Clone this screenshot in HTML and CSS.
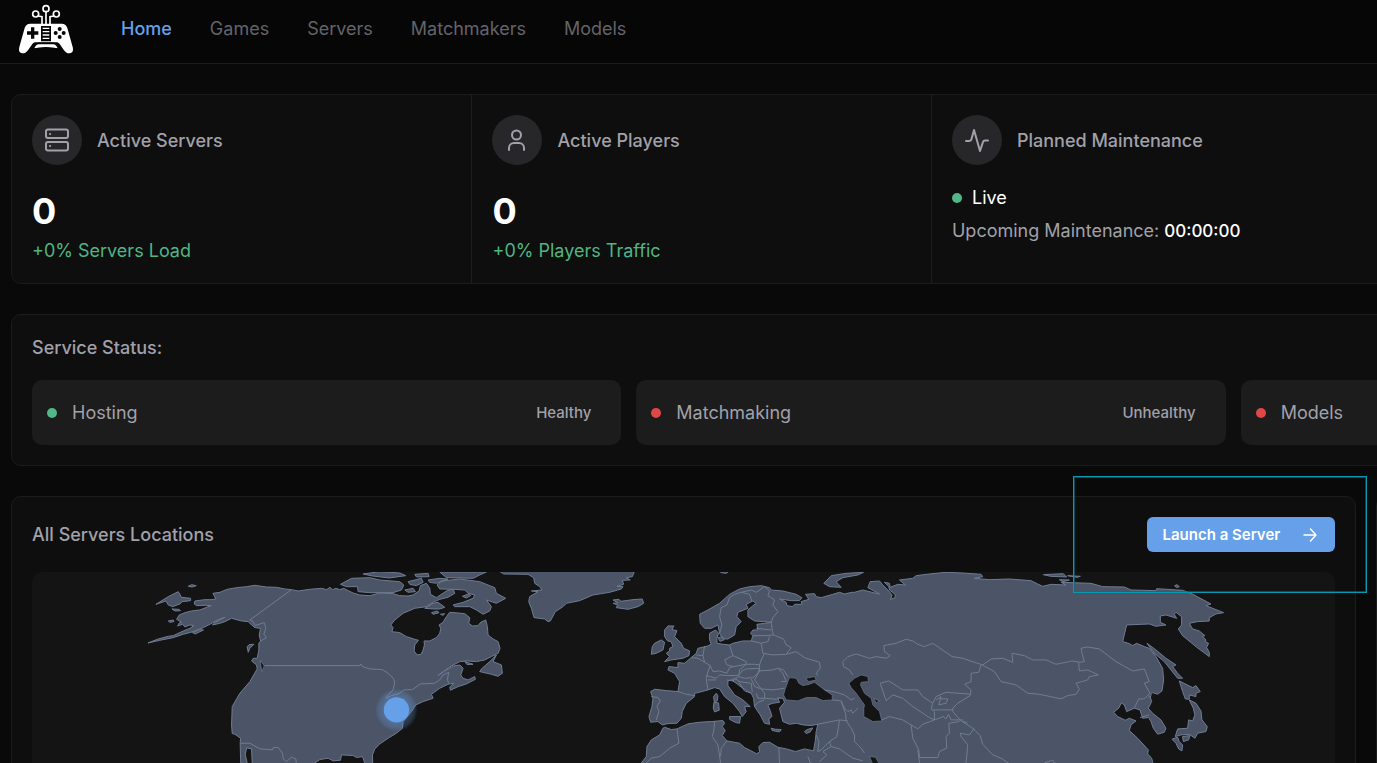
FILE: index.html
```html
<!DOCTYPE html>
<html lang="en">
<head>
<meta charset="utf-8">
<meta name="viewport" content="width=device-width, initial-scale=1">
<title>Dashboard</title>
<link rel="stylesheet" href="styles.css">
</head>
<body>
<header class="topbar">
  <a class="logo" href="#" aria-label="Dashboard">
    <svg viewBox="0 0 165 150" width="55" height="50" aria-hidden="true">
      <g fill="none" stroke="#fff" stroke-width="5">
        <circle cx="81" cy="14" r="9"/><circle cx="50" cy="30" r="9"/><circle cx="112" cy="30" r="9"/>
        <path d="M81 23v40M57 36l12 2v26M105 36l-12 2v26"/>
      </g>
      <path fill="#fff" d="M34 59h94c10 0 14 5 17 13l16 57c3 13-1 19-10 19-7 0-12-4-17-11l-12-17c-3-3-6-5-10-5H50c-4 0-7 2-10 5l-12 17c-5 7-10 11-17 11-9 0-13-6-10-19l16-57c3-8 7-13 17-13z"/>
      <path fill="#fff" stroke="#060606" stroke-width="5" d="M42 136c4-11 8-18 17-18h44c9 0 13 7 17 18-25-6-53-6-78 0z"/>
      <path fill="#060606" d="M66 66h30v46H66zM36 70h10v12h12v10H46v12H36V92H24V82h12z"/>
      <path stroke="#fff" stroke-width="4" d="M71 73h20M71 83h20M71 93h20M71 103h20"/>
      <g fill="#060606"><circle cx="122" cy="75" r="6"/><circle cx="122" cy="99" r="6"/><circle cx="110" cy="87" r="6"/><circle cx="134" cy="87" r="6"/></g>
    </svg>
  </a>
  <nav class="nav" aria-label="Main">
    <a class="nav-link active" href="#">Home</a>
    <a class="nav-link" href="#">Games</a>
    <a class="nav-link" href="#">Servers</a>
    <a class="nav-link" href="#">Matchmakers</a>
    <a class="nav-link" href="#">Models</a>
  </nav>
</header>

<main class="content">
  <section class="panel stats">
    <article class="stat">
      <div class="stat-head">
        <span class="stat-icon"><svg viewBox="0 0 24 24" aria-hidden="true"><rect x="1" y="1.500" width="22" height="8.500" rx="2"/><rect x="1" y="14" width="22" height="8.500" rx="2"/><path d="M5 6h.2M5 18h.2"/></svg></span>
        <h2 class="title">Active Servers</h2>
      </div>
      <p class="stat-value">0</p>
      <p class="stat-note">+0% Servers Load</p>
    </article>
    <article class="stat">
      <div class="stat-head">
        <span class="stat-icon"><svg viewBox="0 0 24 24" aria-hidden="true"><circle cx="11.500" cy="7" r="4.500"/><path d="M4 22v-2a5 5 0 0 1 5-5h5a5 5 0 0 1 5 5v2"/></svg></span>
        <h2 class="title">Active Players</h2>
      </div>
      <p class="stat-value">0</p>
      <p class="stat-note">+0% Players Traffic</p>
    </article>
    <article class="stat">
      <div class="stat-head">
        <span class="stat-icon"><svg viewBox="0 0 24 24" aria-hidden="true"><path d="M1 13h3q2 0 2.500-2L9 2l6 21 3-9q.5-1.500 2-1.500h3"/></svg></span>
        <h2 class="title">Planned Maintenance</h2>
      </div>
      <p class="live"><span class="dot ok"></span>Live</p>
      <p class="upcoming">Upcoming Maintenance: <time class="clock">00:00:00</time></p>
    </article>
    <article class="stat"></article>
  </section>

  <section class="panel services">
    <h2 class="title">Service Status:</h2>
    <ul class="service-list">
      <li class="service"><span class="dot ok"></span><span class="service-name">Hosting</span><span class="service-state">Healthy</span></li>
      <li class="service"><span class="dot bad"></span><span class="service-name">Matchmaking</span><span class="service-state">Unhealthy</span></li>
      <li class="service"><span class="dot bad"></span><span class="service-name">Models</span></li>
    </ul>
  </section>

  <div class="lower">
    <section class="panel locations">
      <div class="locations-head">
        <h2 class="title">All Servers Locations</h2>
        <div class="launch-wrap">
          <button class="launch" type="button">Launch a Server
            <svg viewBox="0 0 16 16" width="16" height="16" aria-hidden="true"><path d="M2 8h12M8.500 2l5.500 6-5.500 6"/></svg>
          </button>
          <span class="highlight"></span>
        </div>
      </div>
      <svg class="map" viewBox="-324 21 3912 700" role="img" aria-label="Server locations map">
        <defs>
          <radialGradient id="glow"><stop offset=".5" stop-color="#65a0e8" stop-opacity=".4"/><stop offset=".85" stop-color="#65a0e8" stop-opacity=".2"/><stop offset="1" stop-color="#65a0e8" stop-opacity="0"/></radialGradient>
        </defs>
        <!-- North America -->
        <g class="land">
          <path d="M24 234L55 222 85 214 100 212 130 198 150 190 162 182 150 180 135 186 128 178 113 183 118 174 125 172 110 163 118 150 135 143 155 138 180 135 200 127 214 122 196 121 170 122 163 117 165 108 195 104 214 104 228 102 219 85 240 82 262 73 290 68 320 65 345 61 380 66 410 67 435 72 455 74 475 78 510 73 545 70 560 74 570 67 578 74 588 70 600 74 612 70 625 77 640 84 660 90 690 92 720 84 760 86 780 92 805 93 820 90 838 78 842 62 860 55 870 70 872 88 890 98 920 78 940 72 945 85 925 97 900 103 880 112 860 125 825 130 790 145 765 165 753 180 760 188 756 200 780 203 800 215 825 223 836 226 825 240 823 258 832 270 844 268 850 255 854 240 853 228 870 228 890 218 900 205 903 190 898 180 910 172 920 155 930 142 955 144 975 146 990 158 987 175 998 183 1015 182 1023 172 1038 165 1043 185 1045 210 1060 222 1075 230 1081 250 1075 265 1055 275 1035 285 1010 290 982 288 960 290 935 303 910 320 895 332 915 318 942 303 960 300 970 310 963 330 970 340 985 345 1005 335 1007 343 980 357 955 365 932 376 930 366 942 355 925 358 900 370 875 388 880 400 850 410 828 420 815 440 790 470 788 490 770 505 745 520 720 537 705 552 698 570 702 721 680 721 675 594 668 575 650 578 640 572 605 570 602 586 580 588 565 580 540 584 525 594 500 721 350 721 337 594 335 552 320 549 316 570 322 594 330 721 310 721 302 580 301 535 302 520 285 508 277 506 275 480 277 425 300 385 330 350 352 312 350 300 335 288 340 280 352 280 357 255 357 235 362 228 358 210 362 190 345 188 335 180 325 170 305 168 275 160 255 170 240 175 218 180 225 172 255 157 235 164 210 178 190 188 160 200 130 208 100 218 60 226z"/>
          <path d="M48 118L85 95 115 80 125 97 152 100 152 107 127 110 120 117 98 125 85 120 78 108zM145 64l10-5 14 3-12 4zM96 132l20 1 6 4-16 1zM85 168l15-3 2 5-12 2zM158 203l20-9 13 1-25 12zM322 245l6-6 14-1-12 12-5 12z"/>
          <path d="M602 58L635 40 690 38 720 45 780 50 792 60 785 75 760 83 690 83 655 80 653 65 620 65zM670 27l50-7 60 4 18 8-50 7-50-6z"/>
          <path d="M892 60L905 48 960 42 1020 50 1065 68 1070 85 1098 100 1070 115 1040 105 1055 125 1050 138 1030 148 1010 135 990 125 945 125 940 120 970 112 1000 100 1005 90 985 85 975 75 942 73 900 72zM855 130L880 115 895 112 915 127 900 132 880 132zM875 143l17-5 6 5-18 5zM902 148l13-2-5 5zM805 50l40-10 5 12-20 10-20-4zM825 28l40-3 3 10-38 1zM865 45l35-5 25 2-35 13-20-3zM900 21h140l-20 9-20 10-80-2zM795 75l25-5 7 10-22 2zM968 94l20-8 5 6-14 7z"/>
          <path d="M1070 270L1060 290 1085 300 1088 325 1075 334 1055 328 1020 320 1025 312 1050 290zM975 290l25 8-18 1z"/>
          <path d="M1078 18L1092 27 1165 28 1182 38 1185 55 1200 65 1207 75 1175 78 1195 80 1170 95 1167 110 1175 130 1183 158 1215 162 1225 170 1232 168 1247 140 1270 125 1280 115 1320 107 1360 90 1410 82 1445 72 1450 65 1432 64 1452 58 1448 46 1472 45 1460 38 1478 35 1485 18z"/>
          <path d="M1420 105L1438 103 1444 109 1480 104 1508 102 1512 115 1495 125 1465 133 1430 128 1434 120 1420 115 1434 113z"/>
        </g>
        <path class="water" d="M361 286L373 303 366 320 362 296z"/>
        <path class="border" d="M455 74L330 165 340 170 345 182 373 173 378 190 372 208 380 218 362 228M375 302H660L663 297 668 305 690 312 728 314 745 325 760 340 765 352 760 375 745 390 738 400 755 392 780 385 792 375 818 374 842 357 885 355 900 345 910 330 927 322 923 345 927 355M301 535H330L360 552 398 555 400 548H415L428 565 430 582 440 590 455 577 468 582 472 620"/>
        <!-- Europe and Asia -->
        <g transform="translate(1500 0)">
          <g class="land">
            <path d="M180 148L205 135 240 115 270 88 300 72 330 65 365 62 390 68 395 75 430 78 470 88 487 98 480 107 455 107 420 102 440 112 442 122 460 125 465 118 488 118 485 110 508 103 498 88 525 86 530 95 545 98 580 88 600 82 615 87 637 82 645 82 670 75 710 85 720 87 685 68 692 50 720 48 730 60 745 75 758 90 753 103 767 98 767 88 750 75 748 65 735 52 750 55 752 67 775 58 798 60 780 45 820 40 830 32 870 27 920 22 970 24 1025 28 1030 35 1005 40 1050 44 1110 42 1175 47 1195 57 1210 64 1235 58 1280 60 1265 52 1355 55 1390 65 1455 66 1475 75 1550 77 1552 71 1630 76 1655 85 1715 117 1700 122 1753 143 1730 147 1710 158V168L1675 170 1650 175 1660 192 1680 198 1697 212 1690 214 1700 225 1698 230 1708 235 1702 248 1710 262V275L1670 245 1630 212 1617 192 1627 180V155L1610 142 1605 148 1612 160 1580 150 1563 153V172L1580 180 1550 184 1530 177 1462 180 1450 230 1470 236 1480 242 1492 235 1515 245 1530 250 1550 275 1570 310 1573 345 1568 378 1555 388 1540 383 1532 392 1537 410 1527 430 1540 445 1565 465 1580 490 1575 502 1555 508 1542 490 1535 470 1528 458 1510 460 1502 435 1485 430 1462 440 1455 420 1446 414 1438 430 1423 442 1435 455 1458 466 1470 460 1490 468 1475 480 1470 497 1495 520 1527 555 1525 567 1537 580 1541 594 1550 721H-20L5 594 20 575 22 545 35 525 60 510 70 490 75 487 95 494 112 492 145 477 180 472 215 470 250 467 255 475 248 485 257 497 248 512 262 528 300 535 315 548 352 567 360 560 358 545 370 533 390 532 415 547 440 552 468 560 495 552 522 558 527 530 530 500 535 478 515 482 490 480 470 475 450 478 430 470 425 450 420 430 435 412 430 400 415 400 420 412 400 415 385 420 393 440 397 455 388 462 390 478 375 475 362 450 345 425 342 400 335 385 310 370 290 355 275 345 265 348V362L285 390 310 405 332 425 315 425 320 440 308 455 300 440 280 415 255 395 240 372 225 368 205 375 175 383 165 385V395L140 415 128 440 125 460 112 475 85 476 68 480 55 470 33 472 28 455 37 425 40 400 33 380 45 373 80 377 115 380 120 350 105 325 85 315 88 305 115 308V293L135 295 155 278 170 265 175 250 205 243 215 237 210 225V205L228 195 237 205 232 220V235L250 238 270 240 280 235 310 228 335 228 340 212 333 205 340 195 355 195 352 178 375 175 395 172 372 170 345 168 325 155V135L340 122 350 115 340 108 320 118 325 130 295 142 292 155 305 170 290 185 285 210 265 222 250 222 240 205 235 180 215 190 195 190 182 175z"/>
            <path d="M75 195L85 183 103 183 97 194 112 197 105 215 125 235 132 250 150 258 148 272 130 280 95 285 75 290 90 275 80 265 90 258V250L100 245 95 230 84 228 75 215zM45 235L65 225 75 232 70 255 50 265 35 268 38 245z"/>
            <path d="M553 55L575 32 620 25 672 22 655 30 610 38 590 50 605 67 570 65zM1212 29l60-3 10 10-48-2zM1285 32l38 2-10 3zM1260 44l30 1-20 5zM1606 62l8-3 6 7-10 1zM240 19h28l-8 6-15-2z"/>
            <path d="M230 385l5 8-2 15-9 2-2-15zM223 412l14 2 2 22-14 5-4-12zM270 455l33 0-3 20-12-2-18-10zM395 490l12 3 18 1-5 7-22-4zM495 500l8-6 17-5-8 12-12 5zM236 218l12-3 5 10-12 4z"/>
          </g>
          <path class="water" d="M437 372L447 345 450 338 470 340 478 355 490 362 510 358 525 352 555 375 578 390V405L550 407 530 398 500 398 475 408 440 405 432 390zM498 340L525 335 530 345 508 350z"/>
          <path class="border" d="M240 205L247 180 240 155 245 128 262 120 270 98 285 88 305 82 335 75 350 82 375 65 390 78 385 92 405 105 400 120 415 140 400 158 395 172 398 195 402 210 432 222 440 240 455 248 440 268 400 270 370 265 365 235 335 228M305 82L330 88 337 108M350 190L395 195M340 212L380 212 402 210M365 235L385 230 390 215M270 240L280 272 255 285 262 300 282 305 320 298 345 298 360 300 365 285 375 265M280 272L320 290 320 298M195 243L190 272 195 292 212 302 205 320 200 340 205 375M155 278L175 280 195 292M170 270L190 272M212 302L220 320 240 318 262 325 270 308 282 305M200 332L230 340 240 330 265 332 297 332 300 315 320 298M297 332L307 318 320 312 360 310 355 325 340 338 315 340 297 335 280 348 262 345M205 345L230 345M360 300L360 318 400 315 415 310 430 325 440 350 425 350M415 310L432 315 445 335M360 318L345 345 365 372 400 375 435 370M297 350L335 355 338 380M275 345L285 340 300 350M300 355L315 378 335 385M335 342L345 365 365 372 375 385 375 400 355 400 350 385M375 400L410 403 420 398M345 425L355 412 375 405M440 268L470 260 495 278 540 292 542 310 530 325 535 332M115 380L140 388 165 392M35 395L55 398 62 408 52 425 58 440 50 465M112 492L118 535 90 550 60 575 35 580 20 594M225 470L222 500 218 515 235 540 243 594M262 528L245 550 243 575M418 547L420 600M505 575L520 610M535 478L600 465 625 468M530 510L538 530 535 560 545 555 570 530 592 515 600 465M570 530L575 545 550 560 562 570 540 590M575 545L600 552 640 580 670 588M555 375L590 382 615 390 635 405 645 400M578 405L605 408 615 430 625 440 635 435 640 445 655 430M605 408L610 425 618 445 620 468 635 490 645 510 645 530 665 550 675 565"/>
          <path class="border" d="M640 330L630 315 612 305 610 290 625 275 650 267 690 280 710 275 740 280 752 272 735 260 733 242 770 235 800 223 820 228 835 238 855 245 880 235 938 275 970 280 1005 292 1030 300 1055 282 1090 280 1120 292 1118 265 1155 272 1180 285 1220 285 1250 298 1290 290 1298 288 1322 292 1335 290 1328 265 1325 250 1345 246 1380 252 1430 290 1480 318 1515 312 1530 350 1515 355 1532 385 1515 402 1498 402 1485 430M1028 300L1065 320 1085 350 1130 360 1165 385 1200 388 1265 402 1285 392 1310 388 1320 372 1310 355 1345 345 1350 335 1377 330 1345 315 1320 318 1318 292M1025 300L1018 322 995 325 995 350 975 358 995 375 992 392 955 415 940 430 940 440 965 468 1000 490 1022 512 1030 538 1060 570 1085 580 1115 600M740 407L722 355 748 348 790 375 835 375 850 395 880 415 890 395 920 382 995 388M740 407L760 390 790 400 820 425 870 458 885 465 912 455 920 462 927 448 935 465 970 465M880 415L875 432 885 440V465M890 405L905 395 898 420 920 415 925 402 900 402M880 435L940 435M727 465L750 455 790 465 815 480 820 520 838 555 840 578 895 578 900 560 922 550 920 515 930 505 928 475 960 470M815 480L835 492 850 478 885 465M970 468L985 475M962 505L965 515 985 540 980 594M1004 490L990 510 962 505M1215 594L1240 586 1250 600M835 555L840 594M1527 398L1537 392M1502 458L1530 450"/>
        </g>
        <g transform="translate(2070 0)">
          <path class="water" d="M58 355L75 340 95 330 115 335 117 350 95 352 93 360 105 385 125 400 130 420 150 440 157 468 130 470 103 455V430L105 420 80 385 65 368zM133 400L150 408 140 414zM120 575L138 577 160 615 135 610z"/>
        </g>
        <!-- Japan and Sakhalin -->
        <g class="land" transform="translate(2730 0)">
          <path d="M390 348L430 368 440 362 453 380 440 385V395L420 390V403L408 402 400 380zM420 405L440 415 455 438 458 465 474 485 470 500 445 505 437 520 420 508 395 510 378 515 385 492 415 490 418 465 430 468 437 450 432 430zM368 523L385 517 390 530 400 540 398 558 388 552 380 535zM400 515L422 512 418 525 402 530zM293 235L320 255 350 280 380 300 370 305 385 325 400 340 385 340 365 315 345 290 315 265z"/>
        </g>
        <circle cx="770" cy="435" r="64" fill="url(#glow)"/>
        <circle cx="770" cy="435" r="38" fill="#65a0e8"/>
      </svg>
    </section>
    <aside class="panel"></aside>
  </div>
</main>
</body>
</html>
```

FILE: styles.css
```css
* { box-sizing: border-box; }

html, body { height: 100%; overflow: hidden; }

body {
  margin: 0;
  background: #090909;
  color: #a1a1aa;
  font: 18px/24px Inter, sans-serif;
}

h2, p, ul { margin: 0; padding: 0; }

.topbar {
  display: flex;
  align-items: center;
  gap: 47px;
  height: 64px;
  padding: 0 19px 6px;
  background: #060606;
  border-bottom: 1px solid #1c1c1d;
}

.logo { display: flex; }

.nav { display: flex; gap: 38px; }

.nav-link { color: #636369; text-decoration: none; }

.nav-link.active { color: #65a0e8; font-weight: 500; }

/* The dashboard is wider than the window and runs off to the right. */
.content {
  display: flex;
  flex-direction: column;
  gap: 30px;
  width: 135vw;
  padding: 30px 8px 30px 11px;
}

.panel {
  background: #0e0e0e;
  border: 1px solid #1c1c1d;
  border-radius: 10px;
}

.title { font-size: 18px; line-height: 26px; font-weight: 500; }

.stats {
  display: grid;
  grid-template-columns: repeat(4, 1fr);
  min-height: 190px;
}

.stat { padding: 20px; }

.stat + .stat { border-left: 1px solid #1c1c1d; }

.stat-head { display: flex; align-items: center; gap: 15px; }

.stat-head .title { padding-top: 2px; }

.stat-icon {
  display: grid;
  place-items: center;
  width: 50px;
  height: 50px;
  border-radius: 50%;
  background: #27272a;
}

.stat-icon svg {
  width: 24px;
  height: 24px;
  fill: none;
  stroke: #a1a1aa;
  stroke-width: 2;
  stroke-linecap: round;
  stroke-linejoin: round;
}

.stat-value {
  margin-top: 24px;
  color: #fff;
  font-size: 36px;
  line-height: 44px;
  font-weight: 700;
}

.stat-note { margin-top: 6px; color: #4fb583; }

.dot { width: 10px; height: 10px; border-radius: 50%; }

.ok { background: #52b788; }

.bad { background: #e04848; }

.live {
  display: flex;
  align-items: center;
  gap: 10px;
  margin-top: 21px;
  color: #fff;
}

.upcoming { margin-top: 9px; }

.clock { color: #fff; font-size: 17px; font-weight: 500; }

.services { padding: 20px; }

.service-list {
  display: grid;
  grid-template-columns: repeat(3, 1fr);
  gap: 15px;
  margin-top: 19px;
  list-style: none;
}

.service {
  display: flex;
  align-items: center;
  gap: 15px;
  height: 65px;
  padding: 0 30px 0 15px;
  background: #1c1c1c;
  border-radius: 10px;
}

.service-state { margin-left: auto; font-size: 15px; font-weight: 500; }

.lower {
  display: grid;
  grid-template-columns: 1346fr 475fr;
  gap: 20px;
}

.locations { padding: 20px; }

.locations-head {
  display: flex;
  align-items: center;
  justify-content: space-between;
}

.launch-wrap { position: relative; }

.launch {
  display: flex;
  align-items: center;
  gap: 22px;
  height: 35px;
  padding: 0 17px 0 15px;
  border: 0;
  border-radius: 6px;
  background: #65a0e8;
  color: #fff;
  font: 600 15px/20px Inter, sans-serif;
}

.launch svg {
  fill: none;
  stroke: #fff;
  stroke-width: 1.5;
  stroke-linecap: round;
  stroke-linejoin: round;
}

.highlight {
  position: absolute;
  inset: -41px -32px -41px -74px;
  border: 1px solid #0899b2;
  box-shadow: inset 0 0 0 1px #077088a0;
  pointer-events: none;
}

.map {
  display: block;
  width: 100%;
  margin-top: 20px;
  background: #141414;
  border-radius: 10px;
}

.land { fill: #4c5567; stroke: #6f7c92; stroke-width: 3; stroke-linejoin: round; }

.border { fill: none; stroke: #6f7c92; stroke-width: 3; stroke-linejoin: round; }

.water { fill: #141414; stroke: #6f7c92; stroke-width: 2; }
```
